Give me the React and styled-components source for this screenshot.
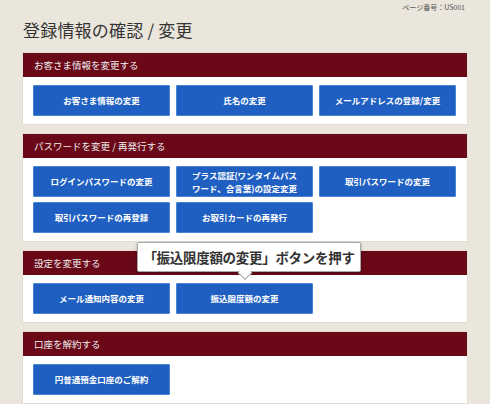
import React from "react";
import styled, { createGlobalStyle } from "styled-components";

const Global = createGlobalStyle`
  html, body { margin: 0; padding: 0; background: #ebe6dc; }
  body { font-family: "Noto Sans CJK JP", "Noto Sans", sans-serif; }
  * { box-sizing: border-box; }
`;

const Page = styled.div`
  width: 490px;
  height: 404px;
  padding: 0 23px;
  overflow: hidden;
`;

const PageNo = styled.div`
  text-align: right;
  padding: 2px 2px 0 0;
  height: 12px;
  font-size: 7px;
  line-height: 10px;
  color: #555;
`;

const Title = styled.h1`
  margin: 7px 0 0;
  font-size: 17px;
  font-weight: 400;
  line-height: 22px;
  height: 34px;
  color: #333;
  letter-spacing: 0.2px;
`;

const Sections = styled.div`
  display: flex;
  flex-direction: column;
  gap: 10px;
`;

const Card = styled.section`
  position: relative;
  background: #fff;
  box-shadow: 0 0 0 1px #e2ddd3;
  flex: none;
`;

const CardHeader = styled.div`
  height: 24px;
  background: #6a0818;
  color: #eee;
  font-size: 9.5px;
  line-height: 24px;
  padding-left: 11px;
`;

const Grid = styled.div`
  display: grid;
  grid-template-columns: repeat(3, 137px);
  grid-auto-rows: 31px;
  column-gap: 6px;
  row-gap: 5px;
  padding: 8px 10px 8px 10px;
`;

const Button = styled.button`
  margin: 0;
  height: 31px;
  background: #1f5fc1;
  border: 1px solid #4a82d2;
  border-radius: 1px;
  color: #fff;
  font-family: "Noto Sans CJK JP", sans-serif;
  font-weight: 700;
  font-size: 8.5px;
  line-height: 12.5px;
  padding: 0 6px;
  display: flex;
  align-items: center;
  justify-content: center;
  text-align: center;
  cursor: pointer;
`;

const Tooltip = styled.div`
  position: absolute;
  left: 114px;
  top: -9px;
  width: 224px;
  height: 30px;
  background: #fff;
  border: 1px solid #a9a9a9;
  border-radius: 2px;
  box-shadow: 0 1px 3px rgba(0,0,0,0.35);
  color: #333;
  font-weight: 700;
  font-size: 13.5px;
  letter-spacing: -0.3px;
  display: flex;
  align-items: center;
  justify-content: center;
  z-index: 2;
  &::after {
    content: "";
    position: absolute;
    left: 102px;
    bottom: -7px;
    width: 9px;
    height: 9px;
    background: #fff;
    border-right: 1px solid #a9a9a9;
    border-bottom: 1px solid #a9a9a9;
    transform: rotate(45deg);
    transform-origin: center;
  }
`;

const sections = [
  { title: "お客さま情報を変更する", buttons: ["お客さま情報の変更", "氏名の変更", "メールアドレスの登録/変更"] },
  {
    title: "パスワードを変更 / 再発行する",
    buttons: [
      "ログインパスワードの変更",
      <>プラス認証(ワンタイムパス<br />ワード、合言葉)の設定変更</>,
      "取引パスワードの変更",
      "取引パスワードの再登録",
      "お取引カードの再発行",
    ],
  },
  { title: "設定を変更する", buttons: ["メール通知内容の変更", "振込限度額の変更"], tip: true },
  { title: "口座を解約する", buttons: ["円普通預金口座のご解約"] },
];

export default function App() {
  return (
    <Page>
      <Global />
      <PageNo>ページ番号：US001</PageNo>
      <Title>登録情報の確認 / 変更</Title>
      <Sections>
        {sections.map((s, i) => (
          <Card key={i}>
            <CardHeader>{s.title}</CardHeader>
            {s.tip && <Tooltip>「振込限度額の変更」ボタンを押す</Tooltip>}
            <Grid>
              {s.buttons.map((b, j) => (
                <Button key={j}>{b}</Button>
              ))}
            </Grid>
          </Card>
        ))}
      </Sections>
    </Page>
  );
}
